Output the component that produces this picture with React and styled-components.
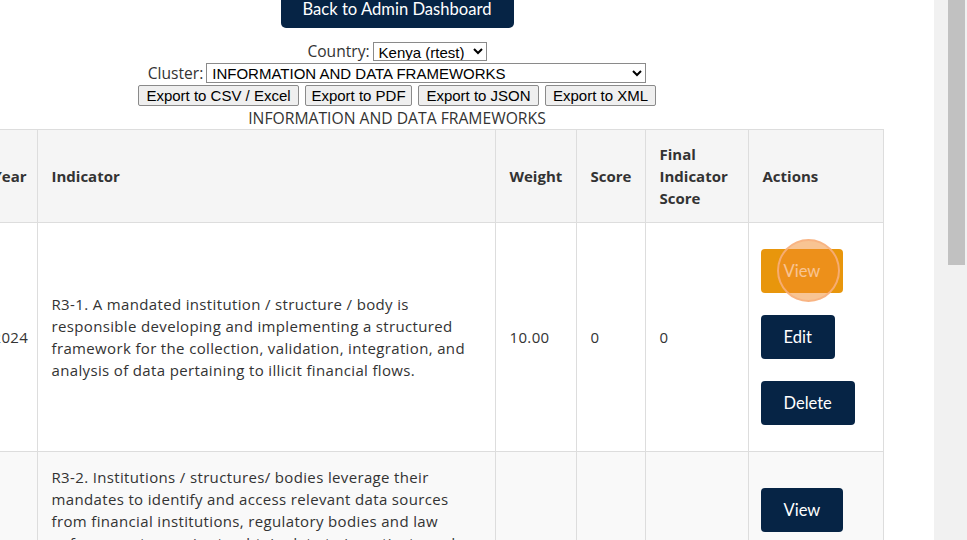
import React from "react";
import styled, { createGlobalStyle } from "styled-components";

const GlobalStyle = createGlobalStyle`
  html, body { margin: 0; padding: 0; background: #fff; overflow: hidden; }
  * { box-sizing: border-box; }
`;

const Screen = styled.div`
  display: flex;
  width: 967px;
  height: 540px;
  overflow: hidden;
`;

const Viewport = styled.div`
  flex: 1;
  min-width: 0;
  overflow: hidden;
`;

const Content = styled.div`
  width: 972px;
  margin: -11px 0 0 -89px;
  display: flex;
  flex-direction: column;
  align-items: center;
`;

const ScrollTrack = styled.div`
  width: 33px;
  height: 540px;
  background: #f1f1f1;
  padding-left: 14px;
  flex-shrink: 0;
`;

const ScrollThumb = styled.div`
  width: 17px;
  height: 265px;
  background: #c1c1c1;
`;

const BackButton = styled.button`
  height: 39px;
  width: 233px;
  border: none;
  border-radius: 5px;
  background: #062445;
  color: #fff;
  font-family: Lato, "Open Sans", sans-serif;
  font-size: 16.6px;
  padding: 0;
  cursor: pointer;
`;

const FormRow = styled.div`
  height: ${(p) => p.$h || 22}px;
  display: flex;
  align-items: center;
  justify-content: center;
  gap: ${(p) => p.$gap || 3}px;
  margin-top: ${(p) => p.$mt || 0}px;
`;

const Label = styled.span`
  font-family: "Open Sans", sans-serif;
  font-size: 15.6px;
  color: #333;
`;

const Select = styled.select`
  font-family: "Liberation Sans", Arial, sans-serif;
  font-size: 15px;
  color: #000;
  width: ${(p) => p.$w}px;
  height: ${(p) => p.$hgt || 19}px;
  padding: 0 1px;
  border: 1px solid #8a8a8a;
  border-radius: 0;
  background: #fff;
`;

const ExportButton = styled.button`
  font-family: "Liberation Sans", Arial, sans-serif;
  font-size: 15px;
  color: #000;
  width: ${(p) => p.$w}px;
  height: 21px;
  padding: 0;
  background: #efefef;
  border: 1px solid #8a8a8a;
  border-radius: 2px;
  line-height: 19px;
  white-space: nowrap;
`;

const Caption = styled.div`
  height: 22px;
  line-height: 22px;
  font-family: "Open Sans", sans-serif;
  font-size: 15.7px;
  color: #333;
  text-align: center;
`;

const Table = styled.table`
  width: 972px;
  border-collapse: collapse;
  table-layout: fixed;
  font-family: "Open Sans", sans-serif;
  font-size: 15px;
  line-height: 22px;
  color: #333;
`;

const Th = styled.th`
  background: #f5f5f5;
  border: 1px solid #dddddd;
  padding: 13px 14px 13px;
  text-align: left;
  font-weight: 700;
  vertical-align: middle;
  color: #333;
`;

const Tr = styled.tr`
  background: ${(p) => (p.$alt ? "#f9f9f9" : "#ffffff")};
`;

const Td = styled.td`
  border: 1px solid #dddddd;
  padding: 14px;
  vertical-align: middle;
  white-space: nowrap;
  letter-spacing: 0.35px;
`;

const ActionStack = styled.div`
  display: flex;
  flex-direction: column;
  align-items: flex-start;
  gap: 22px;
  padding: 12px 0 12px;
  margin-left: -2px;
  letter-spacing: 0;
`;

const ActionButton = styled.button`
  position: relative;
  height: 44px;
  padding: 0 23px;
  border: none;
  border-radius: 4px;
  background: ${(p) => (p.$active ? "#e8960c" : "#062445")};
  color: #fff;
  font-family: Lato, "Open Sans", sans-serif;
  font-size: 16.5px;
  cursor: pointer;
`;

const ClickRipple = styled.span`
  position: absolute;
  left: 16px;
  top: -10px;
  width: 63px;
  height: 63px;
  border-radius: 50%;
  background: rgba(242, 138, 40, 0.5);
  border: 2px solid rgba(248, 178, 128, 0.85);
  pointer-events: none;
`;

const exportsList = [
  { label: "Export to CSV / Excel", w: 161 },
  { label: "Export to PDF", w: 107 },
  { label: "Export to JSON", w: 121 },
  { label: "Export to XML", w: 111 },
];

const rows = [
  {
    id: "1",
    year: "2024",
    lines: [
      "R3-1. A mandated institution / structure / body is",
      "responsible developing and implementing a structured",
      "framework for the collection, validation, integration, and",
      "analysis of data pertaining to illicit financial flows.",
    ],
    weight: "10.00",
    score: "0",
    final: "0",
    actions: ["View", "Edit", "Delete"],
    activeView: true,
  },
  {
    id: "2",
    year: "2024",
    lines: [
      "R3-2. Institutions / structures/ bodies leverage their",
      "mandates to identify and access relevant data sources",
      "from financial institutions, regulatory bodies and law",
      "enforcement agencies to obtain data to investigate and",
      "prosecute illicit financial flows, and establish",
      "mechanisms for sharing such data with relevant",
      "stakeholders in a timely, secure and structured manner,",
      "in line with applicable legal frameworks and data",
      "protection requirements, to support evidence-based",
      "policy and decision making.",
    ],
    weight: "10.00",
    score: "0",
    final: "0",
    actions: ["View", "Edit", "Delete"],
  },
];

export default function App() {
  return (
    <>
      <GlobalStyle />
      <Screen>
        <Viewport>
          <Content>
            <BackButton>Back to Admin Dashboard</BackButton>
            <FormRow $mt={12}>
              <Label>Country:</Label>
              <Select $w={114} defaultValue="ke">
                <option value="ke">Kenya (rtest)</option>
              </Select>
            </FormRow>
            <FormRow>
              <Label>Cluster:</Label>
              <Select $w={440} $hgt={20} defaultValue="idf">
                <option value="idf">INFORMATION AND DATA FRAMEWORKS</option>
              </Select>
            </FormRow>
            <FormRow $h={23} $gap={6}>
              {exportsList.map((e) => (
                <ExportButton key={e.label} $w={e.w}>
                  {e.label}
                </ExportButton>
              ))}
            </FormRow>
            <Caption>INFORMATION AND DATA FRAMEWORKS</Caption>
            <Table>
              <colgroup>
                <col style={{ width: 67 }} />
                <col style={{ width: 59 }} />
                <col style={{ width: 458 }} />
                <col style={{ width: 81 }} />
                <col style={{ width: 69 }} />
                <col style={{ width: 103 }} />
                <col style={{ width: 135 }} />
              </colgroup>
              <thead>
                <tr>
                  <Th>#</Th>
                  <Th>Year</Th>
                  <Th>Indicator</Th>
                  <Th>Weight</Th>
                  <Th>Score</Th>
                  <Th>
                    Final
                    <br />
                    Indicator
                    <br />
                    Score
                  </Th>
                  <Th>Actions</Th>
                </tr>
              </thead>
              <tbody>
                {rows.map((r, i) => (
                  <Tr key={r.id} $alt={i % 2 === 1}>
                    <Td>{r.id}</Td>
                    <Td>{r.year}</Td>
                    <Td>
                      {r.lines.map((l, j) => (
                        <React.Fragment key={j}>
                          {l}
                          {j < r.lines.length - 1 && <br />}
                        </React.Fragment>
                      ))}
                    </Td>
                    <Td>{r.weight}</Td>
                    <Td>{r.score}</Td>
                    <Td>{r.final}</Td>
                    <Td>
                      <ActionStack>
                        {r.actions.map((a) => (
                          <ActionButton
                            key={a}
                            $active={a === "View" && r.activeView}
                          >
                            {a}
                            {a === "View" && r.activeView && <ClickRipple />}
                          </ActionButton>
                        ))}
                      </ActionStack>
                    </Td>
                  </Tr>
                ))}
              </tbody>
            </Table>
          </Content>
        </Viewport>
        <ScrollTrack>
          <ScrollThumb />
        </ScrollTrack>
      </Screen>
    </>
  );
}
